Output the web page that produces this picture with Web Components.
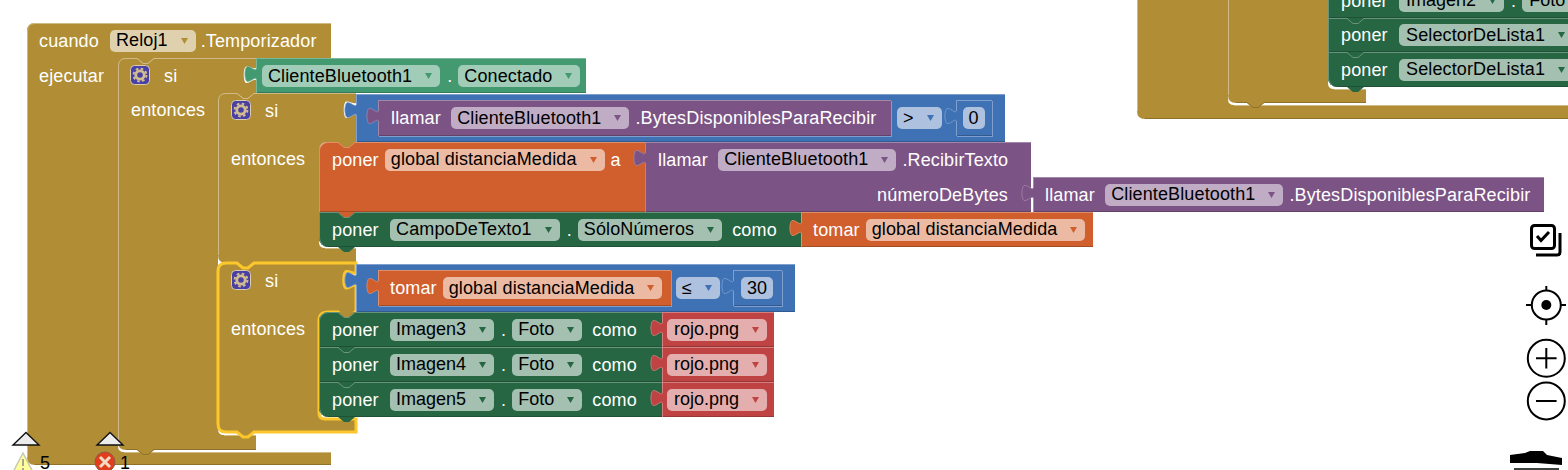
<!DOCTYPE html>
<html lang="es">
<head>
<meta charset="utf-8">
<title>Bloques</title>
<style>
  html, body { margin: 0; background: #fff; overflow: hidden; }
</style>
</head>
<body>
<blk-canvas>
  <!-- bloque de arriba a la derecha -->
  <blk-c x="1137" y="-100" w="1000" hh="40" ax="91" by="205" sw="1000" h="219" hat></blk-c>
  <blk-c x="1228" y="-60" w="138" hh="43" ax="100" by="149" sw="138" h="163" head="43">
    <blk-row h="35" l="12"><blk-label>entonces</blk-label></blk-row>
  </blk-c>
  <blk-stmt k="green" x="1328" y="-17" w="400" h="35" behind="#b18e35" round="tl">
    <blk-label>poner</blk-label><blk-field l="11.300" tx="7" ls="0">Imagen2</blk-field><blk-label l="7">.</blk-label><blk-field l="6" tx="7" ls="0">Foto</blk-field>
  </blk-stmt>
  <blk-stmt k="green" x="1328" y="18" w="400" h="34">
    <blk-label>poner</blk-label><blk-field l="11.300" tx="7">SelectorDeLista1</blk-field>
  </blk-stmt>
  <blk-stmt k="green" x="1328" y="52" w="400" h="35" round="bl">
    <blk-label>poner</blk-label><blk-field l="11.300" tx="7">SelectorDeLista1</blk-field>
  </blk-stmt>

  <!-- cuando Reloj1.Temporizador -->
  <blk-c x="27" y="23" w="304" hh="35" ax="91" by="429" sw="304" h="442" hat head="35">
    <blk-row h="35" l="12"><blk-label>cuando</blk-label><blk-field k="mustard" l="11">Reloj1</blk-field><blk-label l="5">.Temporizador</blk-label></blk-row>
    <blk-row h="35" l="12"><blk-label>ejecutar</blk-label></blk-row>
  </blk-c>

  <blk-c x="118" y="58" w="138" hh="35" ax="100" by="377" sw="138" h="392" tab head="34">
    <blk-row h="35" l="12"><blk-gear></blk-gear><blk-label l="14">si</blk-label></blk-row>
    <blk-row h="35" l="13"><blk-label>entonces</blk-label></blk-row>
  </blk-c>
  <blk-value k="cb" x="256" y="58" w="330" h="35" style="padding-top:1px">
    <blk-field>ClienteBluetooth1</blk-field><blk-label l="7">.</blk-label><blk-field l="6">Conectado</blk-field>
  </blk-value>

  <blk-c x="218" y="93" w="138" hh="49" ax="101" by="155" sw="138" h="170" tab head="48">
    <blk-row h="35" l="13"><blk-gear></blk-gear><blk-label l="14">si</blk-label></blk-row>
    <blk-row h="35" l="13"><blk-label>entonces</blk-label></blk-row>
  </blk-c>
  <blk-value k="blue" x="356" y="94" w="649" h="48" pad="22">
    <blk-value k="purple" nested w="513" h="36" pad="13">
      <blk-label>llamar</blk-label><blk-field l="10.400">ClienteBluetooth1</blk-field><blk-label l="6">.BytesDisponiblesParaRecibir</blk-label>
    </blk-value>
    <blk-field l="6" ls="0">&gt;</blk-field>
    <blk-value k="blue" nested l="14" w="36" h="36" pad="7"><blk-field bare>0</blk-field></blk-value>
  </blk-value>

  <blk-stmt k="orange" x="319" y="142" w="326" h="70" behind="#b18e35" round="tl" style="align-items:flex-start">
    <blk-row h="35"><blk-label>poner</blk-label><blk-field l="6">global distanciaMedida</blk-field><blk-label l="6">a</blk-label></blk-row>
  </blk-stmt>
  <blk-value k="purple" x="645" y="142" w="386" h="70" pad="13" style="display:block">
    <blk-row h="35"><blk-label>llamar</blk-label><blk-field l="10.400">ClienteBluetooth1</blk-field><blk-label l="6">.RecibirTexto</blk-label></blk-row>
    <blk-row h="35" style="justify-content:flex-end;padding-right:23px"><blk-label>númeroDeBytes</blk-label></blk-row>
  </blk-value>
  <blk-value k="purple" x="1033" y="177" w="511" h="35" pad="12">
    <blk-label>llamar</blk-label><blk-field l="10.400">ClienteBluetooth1</blk-field><blk-label l="6">.BytesDisponiblesParaRecibir</blk-label>
  </blk-value>

  <blk-stmt k="green" x="319" y="212" w="482" h="35" behind="#d05f2d" round="bl">
    <blk-label>poner</blk-label><blk-field l="11.300">CampoDeTexto1</blk-field><blk-label l="7">.</blk-label><blk-field l="6">SóloNúmeros</blk-field><blk-label l="10">como</blk-label>
  </blk-stmt>
  <blk-value k="orange" x="801" y="212" w="292" h="35" pad="12">
    <blk-label>tomar</blk-label><blk-field l="6">global distanciaMedida</blk-field>
  </blk-value>

  <blk-c x="218" y="263" w="138" hh="49" ax="101" by="156" sw="138" h="169" tab head="48" selected>
    <blk-row h="35" l="13"><blk-gear></blk-gear><blk-label l="14">si</blk-label></blk-row>
    <blk-row h="35" l="13"><blk-label>entonces</blk-label></blk-row>
  </blk-c>
  <blk-value k="blue" x="356" y="264" w="439" h="48" pad="22">
    <blk-value k="orange" nested w="293" h="36" pad="12">
      <blk-label>tomar</blk-label><blk-field l="6">global distanciaMedida</blk-field>
    </blk-value>
    <blk-field l="5" ls="0">≤</blk-field>
    <blk-value k="blue" nested l="13" w="49" h="36" pad="8"><blk-field bare>30</blk-field></blk-value>
  </blk-value>

  <blk-stmt k="green" x="319" y="312" w="343" h="35" behind="#b18e35" round="tl">
    <blk-label>poner</blk-label><blk-field l="11.300" ls="0">Imagen3</blk-field><blk-label l="7">.</blk-label><blk-field l="6" ls="0">Foto</blk-field><blk-label l="10">como</blk-label>
  </blk-stmt>
  <blk-value k="red" x="662" y="312" w="112" h="35" pad="5"><blk-field tx="7" ls="0">rojo.png</blk-field></blk-value>
  <blk-stmt k="green" x="319" y="347" w="343" h="35">
    <blk-label>poner</blk-label><blk-field l="11.300" ls="0">Imagen4</blk-field><blk-label l="7">.</blk-label><blk-field l="6" ls="0">Foto</blk-field><blk-label l="10">como</blk-label>
  </blk-stmt>
  <blk-value k="red" x="662" y="347" w="112" h="35" pad="5"><blk-field tx="7" ls="0">rojo.png</blk-field></blk-value>
  <blk-stmt k="green" x="319" y="382" w="343" h="35" round="bl">
    <blk-label>poner</blk-label><blk-field l="11.300" ls="0">Imagen5</blk-field><blk-label l="7">.</blk-label><blk-field l="6" ls="0">Foto</blk-field><blk-label l="10">como</blk-label>
  </blk-stmt>
  <blk-value k="red" x="662" y="382" w="112" h="35" pad="5"><blk-field tx="7" ls="0">rojo.png</blk-field></blk-value>

  <blk-alerts></blk-alerts>
  <blk-tools></blk-tools>
</blk-canvas>

<script>
const PALETTE = {
  mustard: { bg: "#b18e35", hi: "#d0bb86", lo: "#8e722a", f: "#dfd1ae" },
  cb:      { bg: "#439970", hi: "#7bb89a", lo: "#357a5a", f: "#a1ccb7" },
  blue:    { bg: "#3f71b5", hi: "#7fa0cf", lo: "#325a90", f: "#aec1df" },
  purple:  { bg: "#7c5385", hi: "#a387aa", lo: "#63426a", f: "#c0adc5" },
  orange:  { bg: "#d05f2d", hi: "#e08f6a", lo: "#a64c24", f: "#ecbaa3" },
  green:   { bg: "#266643", hi: "#67947b", lo: "#1e5236", f: "#a3c0b1" },
  red:     { bg: "#bf4343", hi: "#d57f7f", lo: "#993636", f: "#e5aeae" }
};

function setPalette(el, k) {
  const p = PALETTE[k];
  el.style.setProperty("--bg", p.bg);
  el.style.setProperty("--hi", p.hi);
  el.style.setProperty("--lo", p.lo);
  el.style.setProperty("--f", p.f);
}

function place(el) {
  if (el.hasAttribute("x")) {
    el.style.position = "absolute";
    el.style.left = el.getAttribute("x") + "px";
    el.style.top = el.getAttribute("y") + "px";
  }
  if (el.hasAttribute("w")) el.style.width = el.getAttribute("w") + "px";
  if (el.hasAttribute("h")) el.style.height = el.getAttribute("h") + "px";
}

class BlkCanvas extends HTMLElement {
  constructor() {
    super();
    this.attachShadow({ mode: "open" });
  }
  connectedCallback() {
    this.shadowRoot.innerHTML = `
      <style>
        :host {
          display: block;
          position: relative;
          width: 1568px;
          height: 470px;
          overflow: hidden;
          background: #fff;
          color: #fff;
          font: 18px "Liberation Sans", Arial, sans-serif;
        }
      </style>
      <slot></slot>`;
  }
}

class BlkLabel extends HTMLElement {
  constructor() {
    super();
    this.attachShadow({ mode: "open" });
  }
  connectedCallback() {
    this.shadowRoot.innerHTML = `
      <style>
        :host {
          display: block;
          white-space: nowrap;
          flex: none;
          line-height: 22px;
          margin-left: ${this.getAttribute("l") || 0}px;
          letter-spacing: .14px;
        }
      </style>
      <slot></slot>`;
  }
}

class BlkRow extends HTMLElement {
  constructor() {
    super();
    this.attachShadow({ mode: "open" });
  }
  connectedCallback() {
    this.shadowRoot.innerHTML = `
      <style>
        :host {
          display: flex;
          align-items: center;
          box-sizing: border-box;
          height: ${this.getAttribute("h") || 35}px;
          padding-left: ${this.getAttribute("l") || 0}px;
        }
      </style>
      <slot></slot>`;
  }
}

class BlkField extends HTMLElement {
  constructor() {
    super();
    this.attachShadow({ mode: "open" });
  }
  connectedCallback() {
    const k = this.getAttribute("k");
    if (k) setPalette(this, k);
    const bare = this.hasAttribute("bare");
    const ls = this.hasAttribute("ls") ? this.getAttribute("ls") : ".12";
    this.shadowRoot.innerHTML = `
      <style>
        :host {
          display: flex;
          align-items: center;
          flex: none;
          box-sizing: border-box;
          height: 22px;
          border-radius: 5px;
          padding: 0 ${bare ? 6 : 8}px 0 ${this.getAttribute("tx") || 6}px;
          margin-left: ${this.getAttribute("l") || 0}px;
          background: var(--f);
          color: #000;
          white-space: nowrap;
          letter-spacing: ${ls}px;
        }
        svg { display: block; margin-left: 13px; flex: none; }
      </style>
      <slot></slot>
      ${bare ? "" : `<svg width="7" height="6" viewBox="0 0 7 6"><path d="M0 0H7L3.5 6Z" fill="var(--bg)"/></svg>`}`;
  }
}

class BlkBlock extends HTMLElement {
  constructor() {
    super();
    this.attachShadow({ mode: "open" });
  }
  baseStyle(pad) {
    return `
      :host {
        display: flex;
        align-items: center;
        box-sizing: border-box;
        flex: none;
        background: var(--bg);
        padding-left: ${pad}px;
        box-shadow: inset 0 1px 0 var(--hi), inset 1px 0 0 var(--hi), inset 0 -1px 0 var(--lo);
      }`;
  }
}

// bloque de instruccion, con muesca arriba y pestana abajo
class BlkStmt extends BlkBlock {
  connectedCallback() {
    setPalette(this, this.getAttribute("k"));
    place(this);
    const behind = this.getAttribute("behind") || PALETTE[this.getAttribute("k")].bg;
    const round = this.getAttribute("round") || "";
    const tl = round.includes("tl") ? 9 : 0;
    const bl = round.includes("bl") ? 9 : 0;
    this.shadowRoot.innerHTML = `
      <style>
        ${this.baseStyle(13)}
        :host { border-radius: ${tl}px 0 0 ${bl}px; }
        svg { position: absolute; left: 19px; display: block; overflow: visible; }
        .notch { top: 0; }
        .tab { bottom: -5px; }
      </style>
      <svg class="notch" width="17" height="6"><path d="M0 0L6 5H11L17 0Z" fill="${behind}"/><path d="M0 .5L6 5.5H11L17 .5" fill="none" stroke="var(--hi)"/></svg>
      <svg class="tab" width="17" height="5"><path d="M0 0L6 5H11L17 0Z" fill="var(--bg)"/></svg>
      <slot></slot>`;
  }
}

// bloque de valor, con pieza de puzzle a la izquierda
class BlkValue extends BlkBlock {
  connectedCallback() {
    setPalette(this, this.getAttribute("k"));
    place(this);
    let outline = "";
    if (this.hasAttribute("nested")) {
      const parent = this.parentElement.getAttribute("k");
      outline = `, 1px 1px 0 ${PALETTE[parent].hi}`;
      this.style.marginLeft = (this.getAttribute("l") || 0) + "px";
    }
    const pad = this.getAttribute("pad") || 6;
    this.shadowRoot.innerHTML = `
      <style>
        ${this.baseStyle(pad)}
        :host { position: ${this.hasAttribute("x") ? "absolute" : "relative"}; box-shadow: inset 0 1px 0 var(--hi), inset 1px 0 0 var(--hi), inset 0 -1px 0 var(--lo)${outline}; }
        svg { position: absolute; left: -11px; top: 7px; display: block; overflow: visible; }
      </style>
      <svg width="12" height="18"><path d="M12 4C9 6 6 1 2 1.500C-.8 3.500-.8 14.500 2 16.500C6 17 9 12 12 14Z" fill="var(--bg)"/><path d="M11 4.500C9 6 6 1 2 1.500C-.8 3.500-.8 14.500 2 16.500C6 17 9 12 11 13.500" fill="none" stroke="var(--hi)" stroke-opacity=".8"/></svg>
      <slot></slot>`;
  }
}

// bloque en C (cuando, si/entonces): su forma se calcula con los atributos
class BlkC extends HTMLElement {
  constructor() {
    super();
    this.attachShadow({ mode: "open" });
  }
  connectedCallback() {
    place(this);
    const n = a => Number(this.getAttribute(a));
    const w = n("w"), hh = n("hh"), ax = n("ax"), by = n("by"), sw = n("sw"), h = n("h");
    const hat = this.hasAttribute("hat");
    const tab = this.hasAttribute("tab");
    const selected = this.hasAttribute("selected");
    const shape = [
      "M0 8Q0 0 8 0",
      hat ? "" : "H19L25 5H30L36 0",
      `H${w}`,
      tab ? `V10C${w - 3} 11 ${w - 6} 8 ${w - 10} 8.5C${w - 13} 10 ${w - 13} 23.5 ${w - 10} 25C${w - 6} 25.5 ${w - 3} 21 ${w} 22` : "",
      `V${hh}H${ax + 36}L${ax + 30} ${hh + 5}H${ax + 25}L${ax + 19} ${hh}H${ax + 9}Q${ax} ${hh} ${ax} ${hh + 9}`,
      `V${by - 6}Q${ax} ${by} ${ax + 6} ${by}H${sw}V${h}`,
      hat ? "" : "H36L30 " + (h + 5) + "H25L19 " + h,
      `H8Q0 ${h} 0 ${h - 8}Z`
    ].join("");
    const light = `M.5 ${h - 8}V8Q.5 .5 8 .5${hat ? "" : "H19L25 5.5H30L36 .5"}H${w}M${ax + 6} ${by + .5}H${sw}`;
    const dark = `M8 ${h - .5}${hat ? "" : "H19L25 " + (h + 4.5) + "H30L36 " + (h - .5)}H${sw}`;
    const head = this.getAttribute("head");
    const rows = head ? `${head}px 35px` : "auto";
    this.shadowRoot.innerHTML = `
      <style>
        :host { display: block; width: ${w}px; height: ${h}px; }
        svg { position: absolute; left: 0; top: 0; display: block; overflow: visible; }
        .rows { position: relative; display: grid; grid-template-rows: ${rows}; }
      </style>
      <svg width="${w}" height="${h}">
        <path d="${shape}" fill="#b18e35"/>
        <path d="${light}" fill="none" stroke="#d0bb86"/>
        <path d="${dark}" fill="none" stroke="#8e722a"/>
        ${selected ? `<path d="${shape}" fill="none" stroke="#fcc72c" stroke-width="3"/>` : ""}
      </svg>
      <div class="rows"><slot></slot></div>`;
  }
}

class BlkGear extends HTMLElement {
  constructor() {
    super();
    this.attachShadow({ mode: "open" });
  }
  connectedCallback() {
    this.shadowRoot.innerHTML = `
      <style>
        :host { display: block; flex: none; width: 20px; height: 20px; margin-top: -1px; }
        svg { display: block; }
      </style>
      <svg width="20" height="20" viewBox="0 0 20 20">
        <rect x=".5" y=".5" width="19" height="19" rx="4" fill="#4a3fa5" stroke="#d9cfae"/>
        <circle cx="10" cy="10" r="4.200" fill="none" stroke="#d0bd90" stroke-width="2.800"/>
        <circle cx="10" cy="10" r="6.400" fill="none" stroke="#d0bd90" stroke-width="2" stroke-dasharray="2.600 2.420"/>
      </svg>`;
  }
}

class BlkAlerts extends HTMLElement {
  constructor() {
    super();
    this.attachShadow({ mode: "open" });
  }
  connectedCallback() {
    this.shadowRoot.innerHTML = `
      <style>
        :host { position: absolute; left: 0; top: 0; width: 140px; height: 470px; color: #000; }
        svg { position: absolute; left: 0; top: 0; display: block; }
        span { position: absolute; top: 451px; line-height: 24px; }
      </style>
      <svg width="140" height="480">
        <path d="M26 432.500L39 445H13Z" fill="#ececec" stroke="#111" stroke-width="1.400"/>
        <path d="M110 432.500L123 445H97Z" fill="#ececec" stroke="#111" stroke-width="1.400"/>
        <path d="M23 453L35 476H11Z" fill="#ffff9c" stroke="#c8c8b0" stroke-width="1.500"/>
        <path d="M23 459V466M23 468V470" stroke="#a8a88a" stroke-width="2"/>
        <circle cx="105" cy="462" r="10" fill="#e23e1e" stroke="#8e5a46" stroke-width="1"/>
        <path d="M100 457L110 467M110 457L100 467" stroke="#f1dcc5" stroke-width="3"/>
      </svg>
      <span style="left:40px">5</span>
      <span style="left:120px">1</span>`;
  }
}

class BlkTools extends HTMLElement {
  constructor() {
    super();
    this.attachShadow({ mode: "open" });
  }
  connectedCallback() {
    this.shadowRoot.innerHTML = `
      <style>
        :host { position: absolute; left: 1505px; top: 215px; width: 63px; height: 255px; }
        svg { display: block; }
      </style>
      <svg width="63" height="255" viewBox="1505 215 63 255" fill="none" stroke="#000">
        <rect x="1531.500" y="225.500" width="23" height="23" rx="3" stroke-width="3"/>
        <path d="M1537 236L1541 240.500L1549 232" stroke-width="3"/>
        <path d="M1560 233V252Q1560 255 1557 255H1536" stroke-width="3"/>
        <circle cx="1546.300" cy="305" r="14.500" stroke-width="2"/>
        <circle cx="1546.300" cy="305" r="5" fill="#000" stroke="none"/>
        <path d="M1546.300 286V291M1546.300 319V325M1526 305H1532M1561 305H1566" stroke-width="2"/>
        <circle cx="1546.300" cy="358.300" r="18.500" stroke-width="2"/>
        <path d="M1536 358.300H1556.600M1546.300 348V368.600" stroke-width="2"/>
        <circle cx="1546.300" cy="401" r="18.500" stroke-width="2"/>
        <path d="M1536 401H1556.600" stroke-width="2"/>
        <path d="M1510 455L1525 453L1530 451H1543L1547 455L1562 458V465L1537 463H1510Z" fill="#000" stroke="none"/>
        <path d="M1514 469H1559" stroke-width="1.500"/>
      </svg>`;
  }
}

customElements.define("blk-canvas", BlkCanvas);
customElements.define("blk-label", BlkLabel);
customElements.define("blk-row", BlkRow);
customElements.define("blk-field", BlkField);
customElements.define("blk-stmt", BlkStmt);
customElements.define("blk-value", BlkValue);
customElements.define("blk-c", BlkC);
customElements.define("blk-gear", BlkGear);
customElements.define("blk-alerts", BlkAlerts);
customElements.define("blk-tools", BlkTools);
</script>
</body>
</html>
